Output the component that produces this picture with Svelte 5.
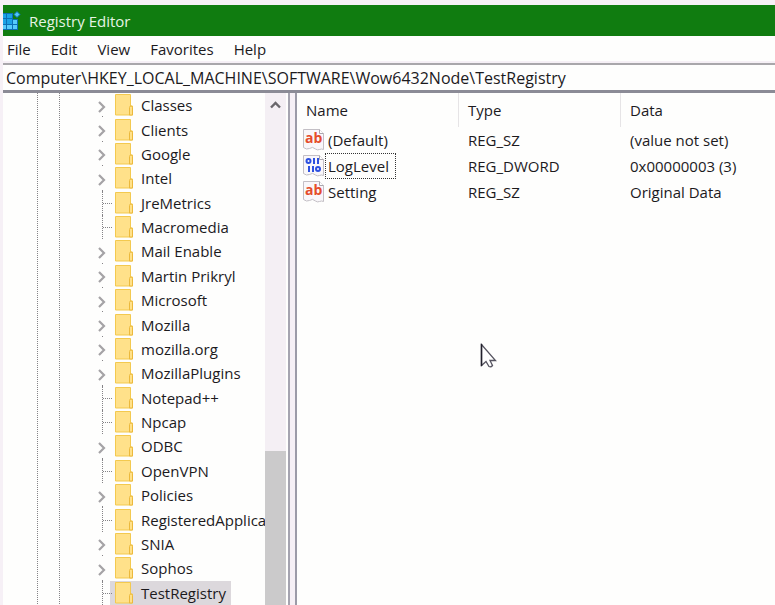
<script>
  const menus = ['File', 'Edit', 'View', 'Favorites', 'Help'];
  const keys = [
    ['Classes', true], ['Clients', true], ['Google', true], ['Intel', true],
    ['JreMetrics', false], ['Macromedia', false], ['Mail Enable', true],
    ['Martin Prikryl', true], ['Microsoft', true], ['Mozilla', true],
    ['mozilla.org', true], ['MozillaPlugins', true], ['Notepad++', false],
    ['Npcap', false], ['ODBC', true], ['OpenVPN', false], ['Policies', true],
    ['RegisteredApplications', false], ['SNIA', true], ['Sophos', true],
    ['TestRegistry', false]
  ];
  const values = [
    { name: '(Default)', type: 'REG_SZ', data: '(value not set)' },
    { name: 'LogLevel', type: 'REG_DWORD', data: '0x00000003 (3)' },
    { name: 'Setting', type: 'REG_SZ', data: 'Original Data' }
  ];
  let selected = $state('TestRegistry');
  let focused = $state('LogLevel');
  let path = $state('Computer\\HKEY_LOCAL_MACHINE\\SOFTWARE\\Wow6432Node\\TestRegistry');
</script>

<div class="window">
  <header class="title">
    <svg class="logo" width="18" height="20" viewBox="0 0 18 20" aria-hidden="true">
      <path d="M0 2h10v6h5v11H0z" fill="#0b6fb4" />
      <g fill="#1ba2e6">
        <rect x="0" y="3" width="3" height="4" />
        <rect x="4" y="3" width="5" height="4" />
        <rect x="0" y="8" width="3" height="5" />
        <rect x="4" y="8" width="5" height="5" />
      </g>
      <g fill="#55cbfa">
        <rect x="10" y="9" width="4" height="4" />
        <rect x="0" y="14" width="3" height="4" />
        <rect x="4" y="14" width="5" height="4" />
        <rect x="10" y="14" width="4" height="4" />
      </g>
      <path d="M14 .500l3 3-3 3-3-3z" fill="#50c6f8" stroke="#0b6fb4" />
    </svg>
    <h1>Registry Editor</h1>
  </header>

  <nav class="menu" aria-label="Main menu">
    {#each menus as item}<button type="button">{item}</button>{/each}
  </nav>

  <input class="address" aria-label="Key path" spellcheck="false" bind:value={path} />

  <main>
    <section class="tree" aria-label="Keys">
      <ul>
        {#each keys as [name, expandable]}
          <li>
            <span class="branch" class:leaf={!expandable}>
              {#if expandable}
                <svg width="10" height="14" viewBox="0 0 10 14" aria-hidden="true">
                  <path d="M2 2l5 5-5 5" fill="none" stroke="#a5a3a6" stroke-width="2.200" />
                </svg>
              {/if}
            </span>
            <button type="button" class:selected={selected === name} onclick={() => (selected = name)}>
              <svg width="18" height="22" viewBox="0 0 18 22" aria-hidden="true">
                <path d="M.5.5h15v11.500h2v9H.5z" fill="#ffe18a" stroke="#f3c94f" />
                <path d="M14.500 13.500q0-1.500 1.500-1.500t1.500 1.500v7.500h-3z" fill="#ffe18a" stroke="#ecb93c" />
              </svg>
              <span>{name}</span>
            </button>
          </li>
        {/each}
      </ul>
      <div class="scroll">
        <button type="button" aria-label="Scroll up">
          <svg width="11" height="8" viewBox="0 0 11 8" aria-hidden="true">
            <path d="M1 6.500l4.500-4.500 4.500 4.500" fill="none" stroke="#69666b" stroke-width="2.400" />
          </svg>
        </button>
        <div class="thumb"></div>
      </div>
    </section>

    <section class="values" aria-label="Values">
      <table>
        <thead>
          <tr><th class="name">Name</th><th class="type">Type</th><th>Data</th></tr>
        </thead>
        <tbody>
          {#each values as v}
            <tr>
              <td>
                <button type="button" onclick={() => (focused = v.name)}>
                  <svg width="22" height="22" viewBox="0 0 22 22" aria-hidden="true">
                    <path d="M.5.500h16l4 4v16q-2-1-4 0t-4-.5q-3-3-6-.5-3 1.500-6-1z" fill="#f9f7fa" stroke="#c3bfc5" />
                    <path d="M16.500.500v4h4" fill="#fff" stroke="#aaa6ad" />
                    {#if v.type === 'REG_SZ'}
                      <text x="2" y="14" class="ab">ab</text>
                    {:else}
                      <g fill="none" stroke="#2d50e0" stroke-width="2">
                        <circle cx="5.500" cy="6" r="2" />
                        <path d="M11 3v6M15 3v6M6 11v6M10 11v6" />
                        <circle cx="15" cy="14" r="2" />
                      </g>
                    {/if}
                  </svg>
                  <span class:focused={focused === v.name}>{v.name}</span>
                </button>
              </td>
              <td>{v.type}</td>
              <td>{v.data}</td>
            </tr>
          {/each}
        </tbody>
      </table>
      <svg class="pointer" width="18" height="28" viewBox="0 0 18 28" aria-hidden="true">
        <path d="M1.500 1.500v21l4.500-4 3 5q2 1 3.500-1l-2.500-5h5.500z" fill="#fff" stroke="#55535f" stroke-width="1.300" />
        <path d="M1.500 1v22" stroke="#22202c" stroke-width="1.500" />
      </svg>
    </section>
  </main>
</div>

<style>
  :global(body) {
    margin: 0;
    background: #f6f0f6;
  }
  .window {
    box-sizing: border-box;
    height: 100vh;
    padding: 5px 0 0 3px;
    display: flex;
    flex-direction: column;
    overflow: hidden;
    font: 15px/20px 'Open Sans', 'Noto Sans', sans-serif;
    color: #1c1a1d;
  }
  button,
  input {
    font: inherit;
    color: inherit;
    border: 0;
    padding: 0;
    margin: 0;
    background: none;
    text-align: left;
  }
  .title {
    height: 31px;
    flex: none;
    display: flex;
    align-items: center;
    gap: 8px;
    background: #107c10;
    color: #e6f4e4;
  }
  h1 {
    margin: 0;
    font: inherit;
  }
  .menu {
    height: 25px;
    flex: none;
    display: flex;
    align-items: center;
    gap: 20px;
    padding: 0 4px;
    background: #fefefd;
    border-bottom: 2px solid #f6f0f6;
  }
  .address {
    height: 30px;
    flex: none;
    box-sizing: border-box;
    width: 100%;
    padding: 0 3px;
    font-size: 16px;
    background: #fefefd;
    border-top: 2px solid #a9a7ab;
    border-bottom: 3px solid #8b8b96;
    outline: 0;
  }
  main {
    flex: 1;
    min-height: 0;
    display: flex;
    gap: 5px;
  }
  .tree {
    width: 287px;
    flex: none;
    box-sizing: border-box;
    display: flex;
    background: #fefefd;
    border-right: 2px solid #a5a4b0;
  }
  ul {
    flex: 1;
    min-width: 0;
    margin: 0;
    padding: 0 0 0 92px;
    list-style: none;
    display: flex;
    flex-direction: column;
    overflow: hidden;
    background:
      repeating-linear-gradient(#858387 0 1px, #fefefd 1px 2px) 34px 0 / 1px 100% no-repeat,
      repeating-linear-gradient(#858387 0 1px, #fefefd 1px 2px) 56px 0 / 1px 100% no-repeat;
  }
  li {
    flex: 1;
    min-height: 24px;
    display: flex;
  }
  .branch {
    position: relative;
    flex: none;
    display: flex;
    align-items: center;
    width: 15px;
    padding-top: 3px;
    box-sizing: border-box;
  }
  .branch::before {
    content: '';
    position: absolute;
    left: 7px;
    bottom: 0;
    height: 1px;
    border-left: 1px dotted #858387;
  }
  .branch.leaf::before {
    height: 100%;
  }
  .branch.leaf::after {
    content: '';
    position: absolute;
    left: 8px;
    top: 50%;
    width: 9px;
    border-top: 1px dotted #858387;
  }
  .branch svg {
    margin-left: 2px;
  }
  li button {
    display: flex;
    align-items: center;
    gap: 8px;
    padding: 0 5px;
    white-space: nowrap;
  }
  li button svg {
    flex: none;
  }
  li button.selected {
    background: #dcd8dc;
  }
  .scroll {
    width: 21px;
    margin-right: 2px;
    display: flex;
    flex-direction: column;
    justify-content: space-between;
    background: #f4eff4;
  }
  .scroll button {
    height: 24px;
    display: flex;
    align-items: center;
    justify-content: center;
  }
  .thumb {
    height: 30%;
    background: #cbcacb;
  }
  .values {
    position: relative;
    flex: 1;
    min-width: 0;
    background: #fefefd;
    border-left: 2px solid #9c9ba8;
  }
  table {
    width: 100%;
    table-layout: fixed;
    border-collapse: separate;
    border-spacing: 0;
  }
  th,
  td {
    padding: 0 9px;
    text-align: left;
    font-weight: normal;
    white-space: nowrap;
  }
  th {
    height: 34px;
    box-sizing: border-box;
    background: linear-gradient(#e6e4e6, #e6e4e6) right / 1px 100% no-repeat;
  }
  th:last-child {
    background: none;
  }
  .name {
    width: 162px;
  }
  .type {
    width: 162px;
  }
  td {
    height: 26px;
  }
  td:first-child {
    padding: 0 6px;
  }
  td button {
    display: flex;
    align-items: center;
  }
  td button span {
    padding: 2px 6px 2px 2px;
    border: 1px dotted transparent;
  }
  td button span.focused {
    border-color: #333;
  }
  .ab {
    font: bold 14px 'Open Sans', sans-serif;
    fill: #e54d2b;
  }
  .pointer {
    position: absolute;
    left: 183px;
    top: 250px;
  }
</style>
